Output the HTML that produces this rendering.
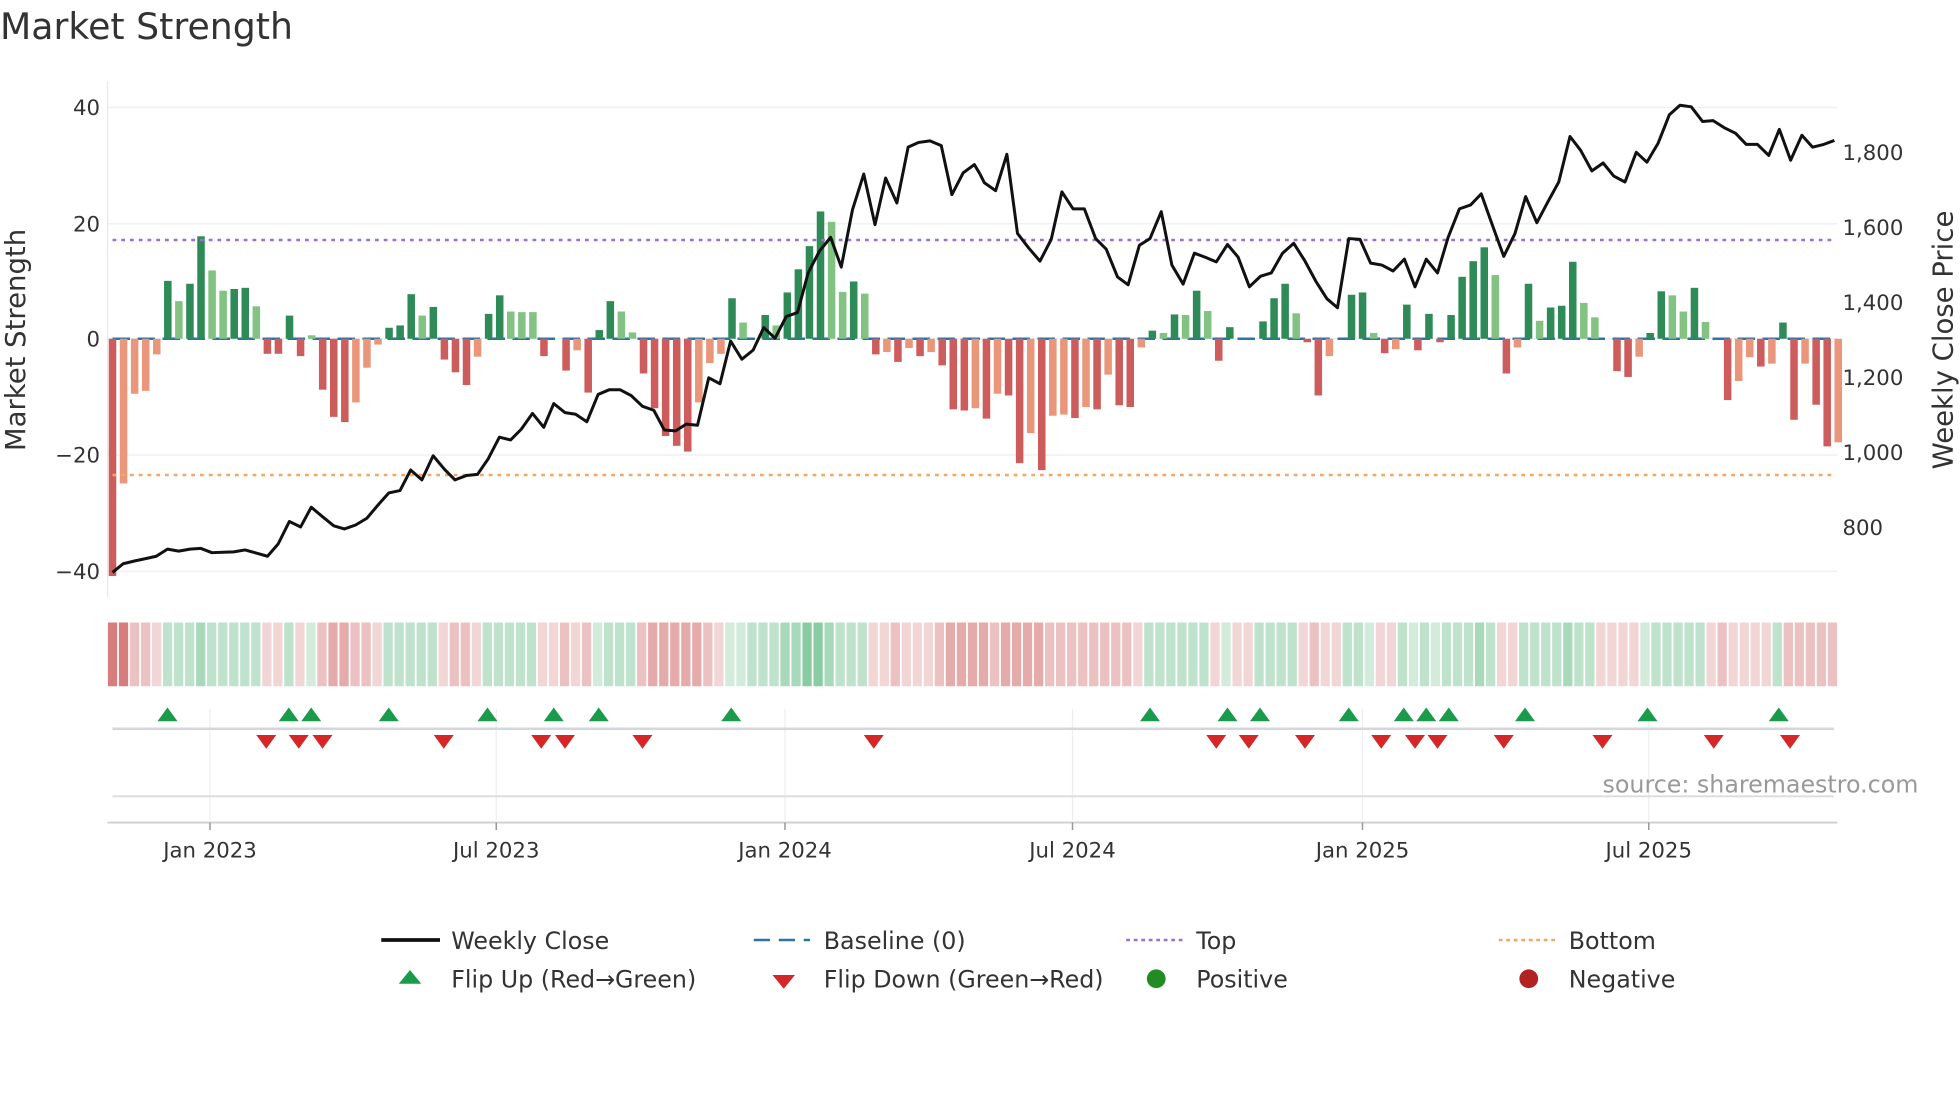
<!DOCTYPE html>
<html><head><meta charset="utf-8"><style>
html,body{margin:0;padding:0;background:#fff;}
svg{display:block;font-family:"DejaVu Sans","Liberation Sans",sans-serif;}
.r{fill:#cd5c5c}.o{fill:#e9967a}.g{fill:#2e8b57}.l{fill:#82c282}
.bars rect{width:.68px}
.strip rect{width:.84px;height:51px}
.ra{fill:#cd5c5c;opacity:.25}.rb{fill:#cd5c5c;opacity:.38}.rc{fill:#cd5c5c;opacity:.52}.rd{fill:#cd5c5c;opacity:.8}
.ga{fill:#4cb070;opacity:.25}.gb{fill:#4cb070;opacity:.36}.gc{fill:#4cb070;opacity:.48}.gd{fill:#4cb070;opacity:.65}
</style></head><body>
<svg width="1960" height="1102" viewBox="0 0 1568 881.6">
<text x="0" y="31" font-size="29" fill="#333">Market Strength</text>
<g stroke="#eef1f4" stroke-width="1.2">
<line x1="86" y1="86" x2="1470" y2="86"/><line x1="86" y1="179" x2="1470" y2="179"/><line x1="86" y1="271" x2="1470" y2="271"/><line x1="86" y1="364" x2="1470" y2="364"/><line x1="86" y1="457" x2="1470" y2="457"/>
</g>
<line x1="86" y1="65" x2="86" y2="478" stroke="#e8e8e8" stroke-width="1"/>
<g font-size="17" fill="#333" text-anchor="end">
<text x="80" y="92">40</text><text x="80" y="185">20</text><text x="80" y="277">0</text><text x="80" y="370">−20</text><text x="80" y="463">−40</text>
</g>
<g font-size="17" fill="#333">
<text x="1474" y="128">1,800</text><text x="1474" y="188">1,600</text><text x="1474" y="248">1,400</text><text x="1474" y="308">1,200</text><text x="1474" y="368">1,000</text><text x="1474" y="428">800</text>
</g>
<text transform="translate(20,272) rotate(-90)" font-size="22" fill="#333" text-anchor="middle">Market Strength</text>
<text transform="translate(1562,272) rotate(-90)" font-size="22" fill="#333" text-anchor="middle">Weekly Close Price</text>
<line x1="90" y1="271" x2="1468" y2="271" stroke="#2b74a8" stroke-width="2" stroke-dasharray="14 6"/>
<g class="bars" transform="translate(87,271) scale(8.85,-4.63)">
<rect class="r" x="0" y="-41" height="41"/><rect class="o" x="1" y="-25" height="25"/><rect class="o" x="2" y="-9.5" height="9.5"/><rect class="o" x="3" y="-9" height="9"/><rect class="o" x="4" y="-2.7" height="2.7"/>
<rect class="g" x="5" y="0" height="10"/><rect class="l" x="6" y="0" height="6.5"/><rect class="g" x="7" y="0" height="9.5"/><rect class="g" x="8" y="0" height="17.7"/><rect class="l" x="9" y="0" height="11.8"/>
<rect class="l" x="10" y="0" height="8.3"/><rect class="g" x="11" y="0" height="8.6"/><rect class="g" x="12" y="0" height="8.8"/><rect class="l" x="13" y="0" height="5.6"/><rect class="r" x="14" y="-2.6" height="2.6"/>
<rect class="r" x="15" y="-2.6" height="2.6"/><rect class="g" x="16" y="0" height="4"/><rect class="r" x="17" y="-3" height="3"/><rect class="l" x="18" y="0" height=".6"/><rect class="r" x="19" y="-8.8" height="8.8"/>
<rect class="r" x="20" y="-13.5" height="13.5"/><rect class="r" x="21" y="-14.4" height="14.4"/><rect class="o" x="22" y="-11" height="11"/><rect class="o" x="23" y="-5" height="5"/><rect class="o" x="24" y="-1" height="1"/>
<rect class="g" x="25" y="0" height="1.9"/><rect class="g" x="26" y="0" height="2.3"/><rect class="g" x="27" y="0" height="7.7"/><rect class="l" x="28" y="0" height="4"/><rect class="g" x="29" y="0" height="5.5"/>
<rect class="r" x="30" y="-3.6" height="3.6"/><rect class="r" x="31" y="-5.8" height="5.8"/><rect class="r" x="32" y="-8" height="8"/><rect class="o" x="33" y="-3.1" height="3.1"/><rect class="g" x="34" y="0" height="4.3"/>
<rect class="g" x="35" y="0" height="7.5"/><rect class="l" x="36" y="0" height="4.7"/><rect class="l" x="37" y="0" height="4.6"/><rect class="l" x="38" y="0" height="4.6"/><rect class="r" x="39" y="-3" height="3"/>
<rect class="r" x="41" y="-5.5" height="5.5"/><rect class="o" x="42" y="-2" height="2"/><rect class="r" x="43" y="-9.3" height="9.3"/><rect class="g" x="44" y="0" height="1.5"/>
<rect class="g" x="45" y="0" height="6.5"/><rect class="l" x="46" y="0" height="4.7"/><rect class="l" x="47" y="0" height="1.1"/><rect class="r" x="48" y="-6" height="6"/><rect class="r" x="49" y="-12" height="12"/>
<rect class="r" x="50" y="-16.8" height="16.8"/><rect class="r" x="51" y="-18.5" height="18.5"/><rect class="r" x="52" y="-19.5" height="19.5"/><rect class="o" x="53" y="-11" height="11"/><rect class="o" x="54" y="-4.2" height="4.2"/>
<rect class="o" x="55" y="-2.6" height="2.6"/><rect class="g" x="56" y="0" height="7"/><rect class="l" x="57" y="0" height="2.8"/><rect class="g" x="59" y="0" height="4.1"/>
<rect class="l" x="60" y="0" height="2.3"/><rect class="g" x="61" y="0" height="8"/><rect class="g" x="62" y="0" height="12"/><rect class="g" x="63" y="0" height="16"/><rect class="g" x="64" y="0" height="22"/>
<rect class="l" x="65" y="0" height="20.2"/><rect class="l" x="66" y="0" height="8.1"/><rect class="g" x="67" y="0" height="9.9"/><rect class="l" x="68" y="0" height="7.8"/><rect class="r" x="69" y="-2.7" height="2.7"/>
<rect class="o" x="70" y="-2.3" height="2.3"/><rect class="r" x="71" y="-4" height="4"/><rect class="o" x="72" y="-1.6" height="1.6"/><rect class="r" x="73" y="-3" height="3"/><rect class="o" x="74" y="-2.3" height="2.3"/>
<rect class="r" x="75" y="-4.6" height="4.6"/><rect class="r" x="76" y="-12.2" height="12.2"/><rect class="r" x="77" y="-12.4" height="12.4"/><rect class="o" x="78" y="-12" height="12"/><rect class="r" x="79" y="-13.8" height="13.8"/>
<rect class="o" x="80" y="-9.5" height="9.5"/><rect class="r" x="81" y="-9.8" height="9.8"/><rect class="r" x="82" y="-21.5" height="21.5"/><rect class="o" x="83" y="-16.3" height="16.3"/><rect class="r" x="84" y="-22.7" height="22.7"/>
<rect class="o" x="85" y="-13.3" height="13.3"/><rect class="o" x="86" y="-13.1" height="13.1"/><rect class="r" x="87" y="-13.7" height="13.7"/><rect class="o" x="88" y="-11.8" height="11.8"/><rect class="r" x="89" y="-12.2" height="12.2"/>
<rect class="o" x="90" y="-6.2" height="6.2"/><rect class="r" x="91" y="-11.5" height="11.5"/><rect class="r" x="92" y="-11.8" height="11.8"/><rect class="o" x="93" y="-1.5" height="1.5"/><rect class="g" x="94" y="0" height="1.4"/>
<rect class="l" x="95" y="0" height="1"/><rect class="g" x="96" y="0" height="4.2"/><rect class="l" x="97" y="0" height="4.1"/><rect class="g" x="98" y="0" height="8.3"/><rect class="l" x="99" y="0" height="4.8"/>
<rect class="r" x="100" y="-3.8" height="3.8"/><rect class="g" x="101" y="0" height="2"/><rect class="g" x="104" y="0" height="3"/>
<rect class="g" x="105" y="0" height="7"/><rect class="g" x="106" y="0" height="9.5"/><rect class="l" x="107" y="0" height="4.4"/><rect class="r" x="108" y="-.6" height=".6"/><rect class="r" x="109" y="-9.8" height="9.8"/>
<rect class="o" x="110" y="-3" height="3"/><rect class="g" x="112" y="0" height="7.6"/><rect class="g" x="113" y="0" height="8"/><rect class="l" x="114" y="0" height="1"/>
<rect class="r" x="115" y="-2.5" height="2.5"/><rect class="o" x="116" y="-1.8" height="1.8"/><rect class="g" x="117" y="0" height="5.9"/><rect class="r" x="118" y="-2" height="2"/><rect class="g" x="119" y="0" height="4.3"/>
<rect class="r" x="120" y="-.6" height=".6"/><rect class="g" x="121" y="0" height="4.1"/><rect class="g" x="122" y="0" height="10.7"/><rect class="g" x="123" y="0" height="13.4"/><rect class="g" x="124" y="0" height="15.8"/>
<rect class="l" x="125" y="0" height="11"/><rect class="r" x="126" y="-6" height="6"/><rect class="o" x="127" y="-1.5" height="1.5"/><rect class="g" x="128" y="0" height="9.5"/><rect class="l" x="129" y="0" height="3.1"/>
<rect class="g" x="130" y="0" height="5.4"/><rect class="g" x="131" y="0" height="5.7"/><rect class="g" x="132" y="0" height="13.3"/><rect class="l" x="133" y="0" height="6.2"/><rect class="l" x="134" y="0" height="3.7"/>
<rect class="r" x="136" y="-5.6" height="5.6"/><rect class="r" x="137" y="-6.6" height="6.6"/><rect class="o" x="138" y="-3.1" height="3.1"/><rect class="g" x="139" y="0" height="1"/>
<rect class="g" x="140" y="0" height="8.2"/><rect class="l" x="141" y="0" height="7.5"/><rect class="l" x="142" y="0" height="4.7"/><rect class="g" x="143" y="0" height="8.8"/><rect class="l" x="144" y="0" height="2.9"/>
<rect class="r" x="146" y="-10.6" height="10.6"/><rect class="o" x="147" y="-7.3" height="7.3"/><rect class="o" x="148" y="-3.2" height="3.2"/><rect class="r" x="149" y="-4.8" height="4.8"/>
<rect class="o" x="150" y="-4.3" height="4.3"/><rect class="g" x="151" y="0" height="2.8"/><rect class="r" x="152" y="-14" height="14"/><rect class="o" x="153" y="-4.3" height="4.3"/><rect class="r" x="154" y="-11.4" height="11.4"/>
<rect class="r" x="155" y="-18.6" height="18.6"/><rect class="o" x="156" y="-17.9" height="17.9"/>
</g>
<line x1="90" y1="192" x2="1468" y2="192" stroke="#9b6fd8" stroke-width="2" stroke-dasharray="3 4"/>
<line x1="90" y1="380" x2="1468" y2="380" stroke="#f0a868" stroke-width="2" stroke-dasharray="3 4"/>
<g fill="none" stroke="#111" stroke-width="3" stroke-linejoin="round">
<polyline vector-effect="non-scaling-stroke" transform="scale(0.5,0.3165)" points="180,1447 197,1425 215,1418 233,1412 250,1406 268,1388 286,1393 304,1388 321,1386 339,1397 357,1396 374,1395 392,1390 410,1398 428,1406 445,1375 463,1318 481,1332 498,1282 516,1306 534,1329 551,1337 569,1327 587,1310 604,1278 622,1246 640,1240 657,1188 675,1213 693,1152 711,1186 728,1213 746,1202 764,1199 781,1160 799,1105 817,1112 834,1085 852,1045 870,1080 886,1020 904,1043 921,1047 939,1066 957,997 975,985 992,985 1010,1000 1028,1027 1046,1037 1063,1087 1081,1089 1098,1072 1116,1075 1134,955 1152,970 1169,862 1187,908 1205,885 1222,828 1240,855 1258,800 1276,790 1293,690 1311,635 1329,600 1346,675 1364,530 1382,440 1400,568 1417,450 1435,513 1453,372 1470,360 1488,356 1506,368 1523,492 1541,437 1559,416 1568,440"/>
<polyline vector-effect="non-scaling-stroke" transform="translate(784,0) scale(0.5,0.3165)" points="0,440 7,462 25,482 43,390 60,590 78,627 96,660 114,605 131,485 149,528 167,528 185,603 202,630 220,700 237,720 255,620 272,603 290,535 307,670 325,718 343,640 360,650 378,662 396,618 413,650 431,725 449,698 466,690 484,640 502,615 520,660 537,710 555,755 572,778 590,603 608,605 625,665 643,670 661,685 679,655 696,725 714,655 732,690 749,600 767,528 785,518 802,490 820,570 838,648 856,590 873,497 891,563 908,512 926,460 944,345 961,380 979,432 997,412 1014,445 1032,460 1050,385 1067,410 1085,362 1103,290 1120,266 1138,270 1156,307 1173,305 1191,323 1209,337 1226,365 1244,365 1262,393 1279,327 1297,405 1315,342 1332,372 1350,365 1367,355"/>
</g>
<g class="strip" transform="translate(86.3,498) scale(8.82,1)">
<rect class="rd" x="0"/><rect class="rd" x="1"/><rect class="rb" x="2"/><rect class="rb" x="3"/><rect class="ra" x="4"/><rect class="gb" x="5"/><rect class="gb" x="6"/><rect class="gb" x="7"/><rect class="gc" x="8"/><rect class="gb" x="9"/>
<rect class="gb" x="10"/><rect class="gb" x="11"/><rect class="gb" x="12"/><rect class="gb" x="13"/><rect class="ra" x="14"/><rect class="ra" x="15"/><rect class="gb" x="16"/><rect class="ra" x="17"/><rect class="ga" x="18"/><rect class="rb" x="19"/>
<rect class="rc" x="20"/><rect class="rc" x="21"/><rect class="rb" x="22"/><rect class="rb" x="23"/><rect class="ra" x="24"/><rect class="gb" x="25"/><rect class="gb" x="26"/><rect class="gb" x="27"/><rect class="gb" x="28"/><rect class="gb" x="29"/>
<rect class="ra" x="30"/><rect class="rb" x="31"/><rect class="rb" x="32"/><rect class="ra" x="33"/><rect class="gb" x="34"/><rect class="gb" x="35"/><rect class="gb" x="36"/><rect class="gb" x="37"/><rect class="gb" x="38"/><rect class="ra" x="39"/>
<rect class="ra" x="40"/><rect class="rb" x="41"/><rect class="ra" x="42"/><rect class="rb" x="43"/><rect class="ga" x="44"/><rect class="gb" x="45"/><rect class="gb" x="46"/><rect class="gb" x="47"/><rect class="rb" x="48"/><rect class="rc" x="49"/>
<rect class="rc" x="50"/><rect class="rc" x="51"/><rect class="rc" x="52"/><rect class="rc" x="53"/><rect class="rb" x="54"/><rect class="ra" x="55"/><rect class="ga" x="56"/><rect class="ga" x="57"/><rect class="gb" x="58"/><rect class="gb" x="59"/>
<rect class="gb" x="60"/><rect class="gc" x="61"/><rect class="gc" x="62"/><rect class="gd" x="63"/><rect class="gd" x="64"/><rect class="gc" x="65"/><rect class="gb" x="66"/><rect class="gb" x="67"/><rect class="gb" x="68"/><rect class="ra" x="69"/>
<rect class="ra" x="70"/><rect class="rb" x="71"/><rect class="ra" x="72"/><rect class="ra" x="73"/><rect class="ra" x="74"/><rect class="rb" x="75"/><rect class="rc" x="76"/><rect class="rc" x="77"/><rect class="rc" x="78"/><rect class="rc" x="79"/>
<rect class="rb" x="80"/><rect class="rc" x="81"/><rect class="rc" x="82"/><rect class="rc" x="83"/><rect class="rc" x="84"/><rect class="rb" x="85"/><rect class="rb" x="86"/><rect class="rb" x="87"/><rect class="rb" x="88"/><rect class="rb" x="89"/>
<rect class="rb" x="90"/><rect class="rb" x="91"/><rect class="rb" x="92"/><rect class="ra" x="93"/><rect class="gb" x="94"/><rect class="gb" x="95"/><rect class="gb" x="96"/><rect class="gb" x="97"/><rect class="gb" x="98"/><rect class="gb" x="99"/>
<rect class="ra" x="100"/><rect class="ga" x="101"/><rect class="ra" x="102"/><rect class="ra" x="103"/><rect class="gb" x="104"/><rect class="gb" x="105"/><rect class="gb" x="106"/><rect class="gb" x="107"/><rect class="ra" x="108"/><rect class="rb" x="109"/>
<rect class="ra" x="110"/><rect class="ra" x="111"/><rect class="gb" x="112"/><rect class="gb" x="113"/><rect class="ga" x="114"/><rect class="ra" x="115"/><rect class="ra" x="116"/><rect class="gb" x="117"/><rect class="ga" x="118"/><rect class="gb" x="119"/>
<rect class="ga" x="120"/><rect class="gb" x="121"/><rect class="gb" x="122"/><rect class="gb" x="123"/><rect class="gc" x="124"/><rect class="gb" x="125"/><rect class="ra" x="126"/><rect class="ra" x="127"/><rect class="gb" x="128"/><rect class="gb" x="129"/>
<rect class="gb" x="130"/><rect class="gb" x="131"/><rect class="gc" x="132"/><rect class="gb" x="133"/><rect class="gb" x="134"/><rect class="ra" x="135"/><rect class="ra" x="136"/><rect class="ra" x="137"/><rect class="ra" x="138"/><rect class="ga" x="139"/>
<rect class="gb" x="140"/><rect class="gb" x="141"/><rect class="gb" x="142"/><rect class="gb" x="143"/><rect class="gb" x="144"/><rect class="ra" x="145"/><rect class="rb" x="146"/><rect class="ra" x="147"/><rect class="ra" x="148"/><rect class="ra" x="149"/>
<rect class="ra" x="150"/><rect class="gb" x="151"/><rect class="rb" x="152"/><rect class="rb" x="153"/><rect class="rb" x="154"/><rect class="rb" x="155"/><rect class="rb" x="156"/>
</g>
<g stroke="#eceef1" stroke-width="1">
<line x1="168" y1="567" x2="168" y2="656"/><line x1="397" y1="567" x2="397" y2="656"/><line x1="628" y1="567" x2="628" y2="656"/><line x1="858" y1="567" x2="858" y2="656"/><line x1="1090" y1="567" x2="1090" y2="656"/><line x1="1319" y1="567" x2="1319" y2="656"/>
</g>
<line x1="90" y1="583" x2="1467" y2="583" stroke="#d3d7dc" stroke-width="2"/>
<line x1="90" y1="637" x2="1467" y2="637" stroke="#dcdcdc" stroke-width="1.5"/>
<line x1="86" y1="658" x2="1470" y2="658" stroke="#cfcfcf" stroke-width="1.5"/>
<g stroke="#999" stroke-width="1.2">
<line x1="168" y1="658" x2="168" y2="664"/><line x1="397" y1="658" x2="397" y2="664"/><line x1="628" y1="658" x2="628" y2="664"/><line x1="858" y1="658" x2="858" y2="664"/><line x1="1090" y1="658" x2="1090" y2="664"/><line x1="1319" y1="658" x2="1319" y2="664"/>
</g>
<g fill="#1a9b4b">
<path d="M134 566l-8 11h16z"/><path d="M231 566l-8 11h16z"/><path d="M249 566l-8 11h16z"/><path d="M311 566l-8 11h16z"/><path d="M390 566l-8 11h16z"/><path d="M443 566l-8 11h16z"/><path d="M479 566l-8 11h16z"/><path d="M585 566l-8 11h16z"/><path d="M920 566l-8 11h16z"/><path d="M982 566l-8 11h16z"/><path d="M1008 566l-8 11h16z"/><path d="M1079 566l-8 11h16z"/><path d="M1123 566l-8 11h16z"/><path d="M1141 566l-8 11h16z"/><path d="M1159 566l-8 11h16z"/><path d="M1220 566l-8 11h16z"/><path d="M1318 566l-8 11h16z"/><path d="M1423 566l-8 11h16z"/>
</g>
<g fill="#d62728">
<path d="M213 599l-8-11h16z"/><path d="M239 599l-8-11h16z"/><path d="M258 599l-8-11h16z"/><path d="M355 599l-8-11h16z"/><path d="M433 599l-8-11h16z"/><path d="M452 599l-8-11h16z"/><path d="M514 599l-8-11h16z"/><path d="M699 599l-8-11h16z"/><path d="M973 599l-8-11h16z"/><path d="M999 599l-8-11h16z"/><path d="M1044 599l-8-11h16z"/><path d="M1105 599l-8-11h16z"/><path d="M1132 599l-8-11h16z"/><path d="M1150 599l-8-11h16z"/><path d="M1203 599l-8-11h16z"/><path d="M1282 599l-8-11h16z"/><path d="M1371 599l-8-11h16z"/><path d="M1432 599l-8-11h16z"/>
</g>
<text x="1282" y="634" font-size="19" fill="#999">source: sharemaestro.com</text>
<g font-size="17" fill="#333" text-anchor="middle">
<text x="168" y="686">Jan 2023</text><text x="397" y="686">Jul 2023</text><text x="628" y="686">Jan 2024</text><text x="858" y="686">Jul 2024</text><text x="1090" y="686">Jan 2025</text><text x="1319" y="686">Jul 2025</text>
</g>
<g font-size="19" fill="#333">
<line x1="305" y1="752" x2="352" y2="752" stroke="#111" stroke-width="3"/><text x="361" y="759">Weekly Close</text>
<line x1="603" y1="752" x2="648" y2="752" stroke="#2b74a8" stroke-width="2" stroke-dasharray="13 7"/><text x="659" y="759">Baseline (0)</text>
<line x1="901" y1="752" x2="946" y2="752" stroke="#9b6fd8" stroke-width="2" stroke-dasharray="3 3"/><text x="957" y="759">Top</text>
<line x1="1199" y1="752" x2="1244" y2="752" stroke="#f0a868" stroke-width="2" stroke-dasharray="3 3"/><text x="1255" y="759">Bottom</text>
<path d="M328 776l-9 11h18z" fill="#1a9b4b"/><text x="361" y="790">Flip Up (Red→Green)</text>
<path d="M627 791l-9-11h18z" fill="#d62728"/><text x="659" y="790">Flip Down (Green→Red)</text>
<circle cx="925" cy="783" r="7.5" fill="#228b22"/><text x="957" y="790">Positive</text>
<circle cx="1223" cy="783" r="7.5" fill="#b22222"/><text x="1255" y="790">Negative</text>
</g>
</svg>
</body></html>
